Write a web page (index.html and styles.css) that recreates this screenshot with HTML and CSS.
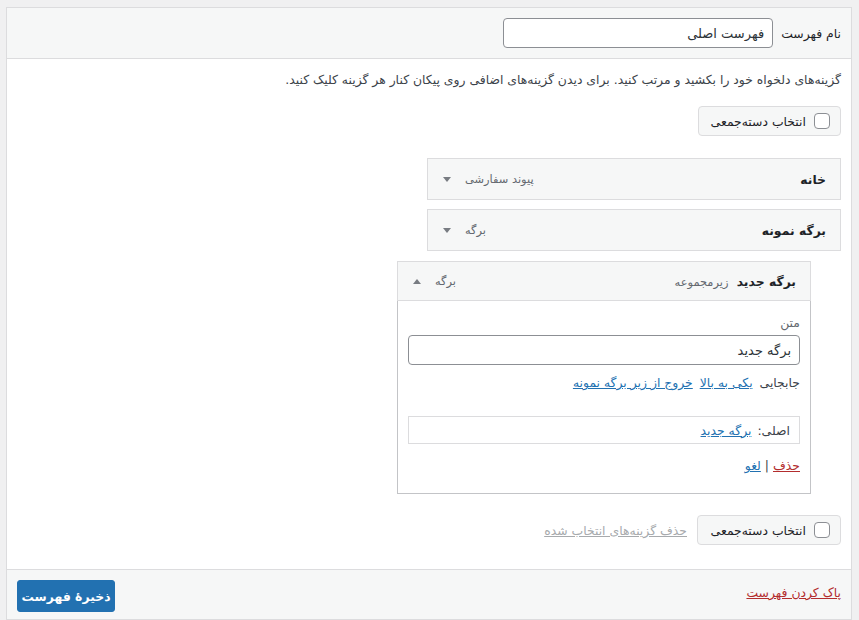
FILE: index.html
```html
<!DOCTYPE html>
<html lang="fa" dir="rtl">
<head>
<meta charset="utf-8">
<title>ویرایش فهرست</title>
<link rel="stylesheet" href="styles.css">
</head>
<body>
<div class="menu-edit">
  <div class="menu-header">
    <label class="menu-name-label">نام فهرست</label>
    <input class="text-input menu-name" type="text" value="فهرست اصلی">
  </div>
  <div class="menu-body">
    <p class="instructions">گزینه‌های دلخواه خود را بکشید و مرتب کنید. برای دیدن گزینه‌های اضافی روی پیکان کنار هر گزینه کلیک کنید.</p>
    <div class="bulk-row top">
      <label class="bulk-box"><span class="cb"></span><span>انتخاب دسته‌جمعی</span></label>
    </div>
    <ul class="menu-list">
      <li class="menu-item">
        <div class="item-bar">
          <span class="item-title">خانه</span>
          <span class="item-controls"><span class="item-type">پیوند سفارشی</span><span class="arrow down"></span></span>
        </div>
      </li>
      <li class="menu-item">
        <div class="item-bar">
          <span class="item-title">برگه نمونه</span>
          <span class="item-controls"><span class="item-type">برگه</span><span class="arrow down"></span></span>
        </div>
      </li>
      <li class="menu-item depth-1 open">
        <div class="item-bar">
          <span class="item-title">برگه جدید <span class="sub-label">زیرمجموعه</span></span>
          <span class="item-controls"><span class="item-type">برگه</span><span class="arrow up"></span></span>
        </div>
        <div class="item-settings">
          <label class="field-label">متن</label>
          <input class="text-input item-input" type="text" value="برگه جدید">
          <div class="move-row">
            <span>جابجایی</span>
            <a href="#" class="link">یکی به بالا</a>
            <a href="#" class="link">خروج از زیر برگه نمونه</a>
          </div>
          <div class="original">اصلی: <a href="#" class="link">برگه جدید</a></div>
          <div class="actions"><a href="#" class="link danger">حذف</a> <span class="sep">|</span> <a href="#" class="link">لغو</a></div>
        </div>
      </li>
    </ul>
    <div class="bulk-row bottom">
      <label class="bulk-box"><span class="cb"></span><span>انتخاب دسته‌جمعی</span></label>
      <a href="#" class="link disabled">حذف گزینه‌های انتخاب شده</a>
    </div>
  </div>
  <div class="menu-footer">
    <a href="#" class="link danger">پاک کردن فهرست</a>
    <button class="save-btn" type="button">ذخیرهٔ فهرست</button>
  </div>
</div>
</body>
</html>
```
FILE: styles.css
```css
html, body {
  margin: 0;
  padding: 0;
}
body {
  background: #f0f0f1;
  padding: 7px 7px 0 6px;
  font-family: "DejaVu Sans", sans-serif;
  font-size: 12.4px;
  color: #3c434a;
  height: 620px;
  box-sizing: border-box;
  overflow: hidden;
}
.menu-edit {
  border: 1px solid #dcdcde;
  background: #fff;
}
.menu-header {
  background: #f6f7f7;
  border-bottom: 1px solid #dcdcde;
  height: 50px;
  padding: 0 10px;
  display: flex;
  align-items: center;
  gap: 8px;
}
.menu-name-label {
  color: #1d2327;
}
.text-input {
  font-family: inherit;
  font-size: 13px;
  color: #2c3338;
  border: 1px solid #8c8f94;
  border-radius: 4px;
  background: #fff;
  padding: 0 8px;
  box-sizing: border-box;
  height: 30px;
  direction: rtl;
  outline: none;
}
.menu-name {
  width: 270px;
}
.menu-body {
  padding: 11px 10px 24px;
}
.instructions {
  margin: 0;
  line-height: 20px;
}
.bulk-row {
  display: flex;
  align-items: center;
  gap: 10px;
}
.bulk-row.top {
  margin-top: 16px;
}
.bulk-row.bottom {
  margin-top: 21px;
}
.bulk-box {
  display: flex;
  align-items: center;
  gap: 8px;
  height: 30px;
  box-sizing: border-box;
  padding: 0 10px;
  background: #f6f7f7;
  border: 1px solid #dcdcde;
  border-radius: 4px;
  color: #1d2327;
}
.bulk-row.top .bulk-box { width: 143px; }
.bulk-row.bottom .bulk-box { width: 144px; }
.cb {
  width: 16px;
  height: 16px;
  box-sizing: border-box;
  border: 1px solid #8c8f94;
  border-radius: 4px;
  background: #fff;
  flex: none;
}
.menu-list {
  list-style: none;
  margin: 22px 0 0;
  padding: 0;
}
.menu-item {
  width: 414px;
  margin-bottom: 9px;
}
.menu-item.depth-1 {
  margin-right: 30px;
  margin-bottom: 0;
  margin-top: 10px;
}
.item-bar {
  height: 42px;
  box-sizing: border-box;
  border: 1px solid #dcdcde;
  background: #f6f7f7;
  display: flex;
  align-items: center;
  justify-content: space-between;
  padding: 0 14px 0 15px;
}
.item-title {
  font-weight: bold;
  color: #1d2327;
  font-size: 12.4px;
}
.sub-label {
  font-weight: normal;
  color: #646970;
  font-size: 11.4px;
  margin-right: 4px;
}
.item-controls {
  display: flex;
  align-items: center;
  gap: 14px;
}
.item-type {
  color: #646970;
  font-size: 11.4px;
}
.arrow {
  width: 0;
  height: 0;
  border-left: 4px solid transparent;
  border-right: 4px solid transparent;
}
.arrow.down {
  border-top: 5px solid #787c82;
}
.arrow.up {
  border-bottom: 5px solid #787c82;
}
.open .item-bar {
  height: 40px;
}
.item-settings {
  border: 1px solid #c3c4c7;
  border-top: none;
  padding: 13px 10px 18px;
}
.field-label {
  display: block;
  color: #646970;
  line-height: 18px;
  margin-bottom: 3px;
}
.item-input {
  width: 100%;
}
.move-row {
  margin-top: 9px;
  line-height: 18px;
  color: #3c434a;
}
.move-row .link {
  margin-right: 3px;
}
.link {
  color: #2271b1;
  text-decoration: underline;
}
.link.danger {
  color: #b32d2e;
}
.link.disabled {
  color: #a7aaad;
}
.original {
  margin-top: 24px;
  border: 1px solid #dcdcde;
  height: 28px;
  box-sizing: border-box;
  padding: 0 9px;
  display: flex;
  align-items: center;
  gap: 6px;
  color: #3c434a;
}
.actions {
  margin-top: 13px;
  line-height: 18px;
}
.sep {
  color: #3c434a;
}
.menu-footer {
  background: #f6f7f7;
  border-top: 1px solid #dcdcde;
  padding: 10px 10px 7px;
  display: flex;
  align-items: flex-start;
  justify-content: space-between;
}
.menu-footer .link {
  margin-top: 4px;
  line-height: 18px;
}
.save-btn {
  font-family: inherit;
  font-size: 12.4px;
  font-weight: bold;
  color: #fff;
  background: #2271b1;
  border: 1px solid #2271b1;
  border-radius: 3px;
  height: 32px;
  width: 98px;
  padding: 0;
}
```
